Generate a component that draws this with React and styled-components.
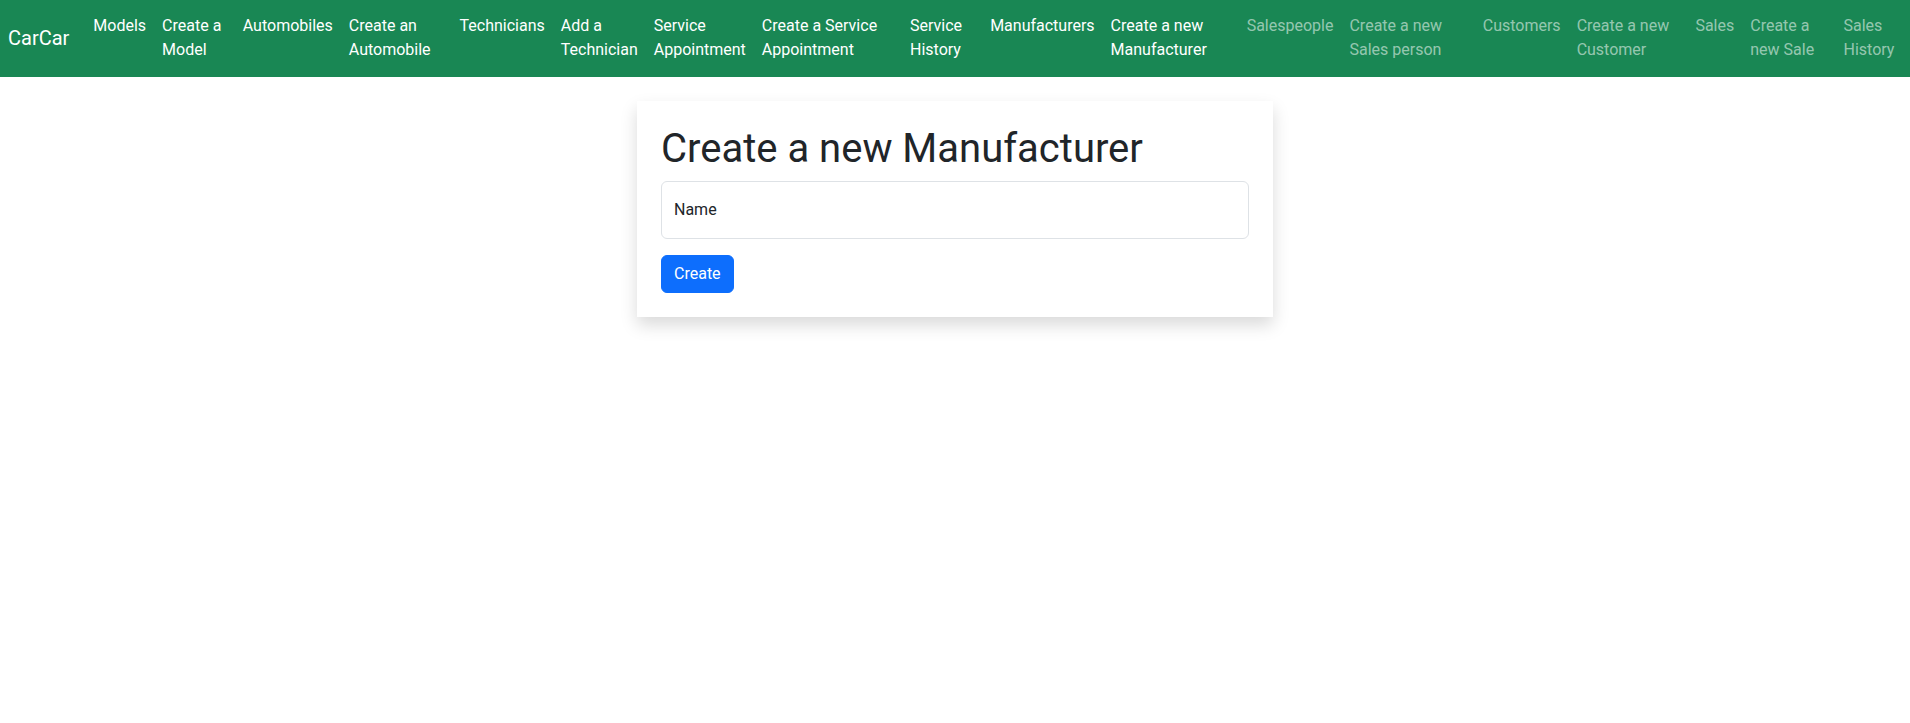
import styled, { createGlobalStyle } from "styled-components"

const GlobalStyle = createGlobalStyle`
  * { box-sizing: border-box; }
  body {
    margin: 0;
    font-family: Roboto, "Liberation Sans", sans-serif;
    font-size: 16px;
    line-height: 1.5;
    color: #212529;
    background: #fff;
  }
`

const Navbar = styled.nav`
  background-color: #198754;
  padding: 6.5px 0 8.5px;
`

const NavContainer = styled.div`
  display: flex;
  flex-wrap: nowrap;
  align-items: center;
  justify-content: space-between;
  padding: 0 3px 0 8px;
`

const Brand = styled.a`
  font-size: 20px;
  line-height: 30px;
  padding: 5px 0;
  margin-right: 16px;
  color: #fff;
  text-decoration: none;
  white-space: nowrap;
`

const Collapse = styled.div`
  display: flex;
  flex-basis: auto;
  flex-grow: 1;
  align-items: center;
`

const NavList = styled.ul`
  display: flex;
  flex-direction: row;
  list-style: none;
  margin: 0;
  padding: 0;
`

const NavItem = styled.li``

const NavLink = styled.a`
  display: block;
  padding: 7px 8px;
  line-height: 24px;
  text-decoration: none;
  color: ${(p) => (p.$dim ? "rgba(255, 255, 255, 0.55)" : "#fff")};
`

const Container = styled.div`
  max-width: 1320px;
  margin: 0 auto;
  padding: 0 12px 40px;
`

const Row = styled.div`
  display: flex;
  margin: 0 -12px;
`

const Column = styled.div`
  flex: 0 0 auto;
  width: 50%;
  margin-left: 25%;
  padding: 0 12px;
`

const Card = styled.div`
  margin-top: 24px;
  padding: 24px;
  background: #fff;
  box-shadow: 0 8px 16px rgba(0, 0, 0, 0.15);
`

const Title = styled.h1`
  margin: 0 0 8px;
  font-size: 40px;
  font-weight: 400;
  line-height: 1.2;
  color: #212529;
`

const Floating = styled.div`
  position: relative;
  margin-bottom: 16px;
`

const Input = styled.input`
  display: block;
  width: 100%;
  height: 58px;
  padding: 16px 12px;
  font: inherit;
  color: #212529;
  border: 1px solid #dee2e6;
  border-radius: 6px;
  outline: none;
`

const FloatLabel = styled.label`
  position: absolute;
  top: 0;
  left: 0;
  padding: 16px 12px;
  border: 1px solid transparent;
  line-height: 24px;
  color: #212529;
  pointer-events: none;
`

const Button = styled.button`
  font: inherit;
  line-height: 24px;
  padding: 6px 12px;
  border: 1px solid #0d6efd;
  border-radius: 6px;
  background-color: #0d6efd;
  color: #fff;
`

const links = [
  ["Models"],
  ["Create a Model"],
  ["Automobiles"],
  ["Create an Automobile"],
  ["Technicians"],
  ["Add a Technician"],
  ["Service Appointment"],
  ["Create a Service Appointment"],
  ["Service History"],
  ["Manufacturers"],
  ["Create a new Manufacturer"],
  ["Salespeople", true],
  ["Create a new Sales person", true],
  ["Customers", true],
  ["Create a new Customer", true],
  ["Sales", true],
  ["Create a new Sale", true],
  ["Sales History", true],
]

const App = () => {
  return (
    <>
      <GlobalStyle />
      <Navbar>
        <NavContainer>
          <Brand href="#">CarCar</Brand>
          <Collapse>
            <NavList>
              {links.map(([label, dim]) => (
                <NavItem key={label}>
                  <NavLink href="#" $dim={dim}>{label}</NavLink>
                </NavItem>
              ))}
            </NavList>
          </Collapse>
        </NavContainer>
      </Navbar>
      <Container>
        <Row>
          <Column>
            <Card>
              <Title>Create a new Manufacturer</Title>
              <form>
                <Floating>
                  <Input type="text" id="name" name="name" />
                  <FloatLabel htmlFor="name">Name</FloatLabel>
                </Floating>
                <Button>Create</Button>
              </form>
            </Card>
          </Column>
        </Row>
      </Container>
    </>
  )
}

export default App
